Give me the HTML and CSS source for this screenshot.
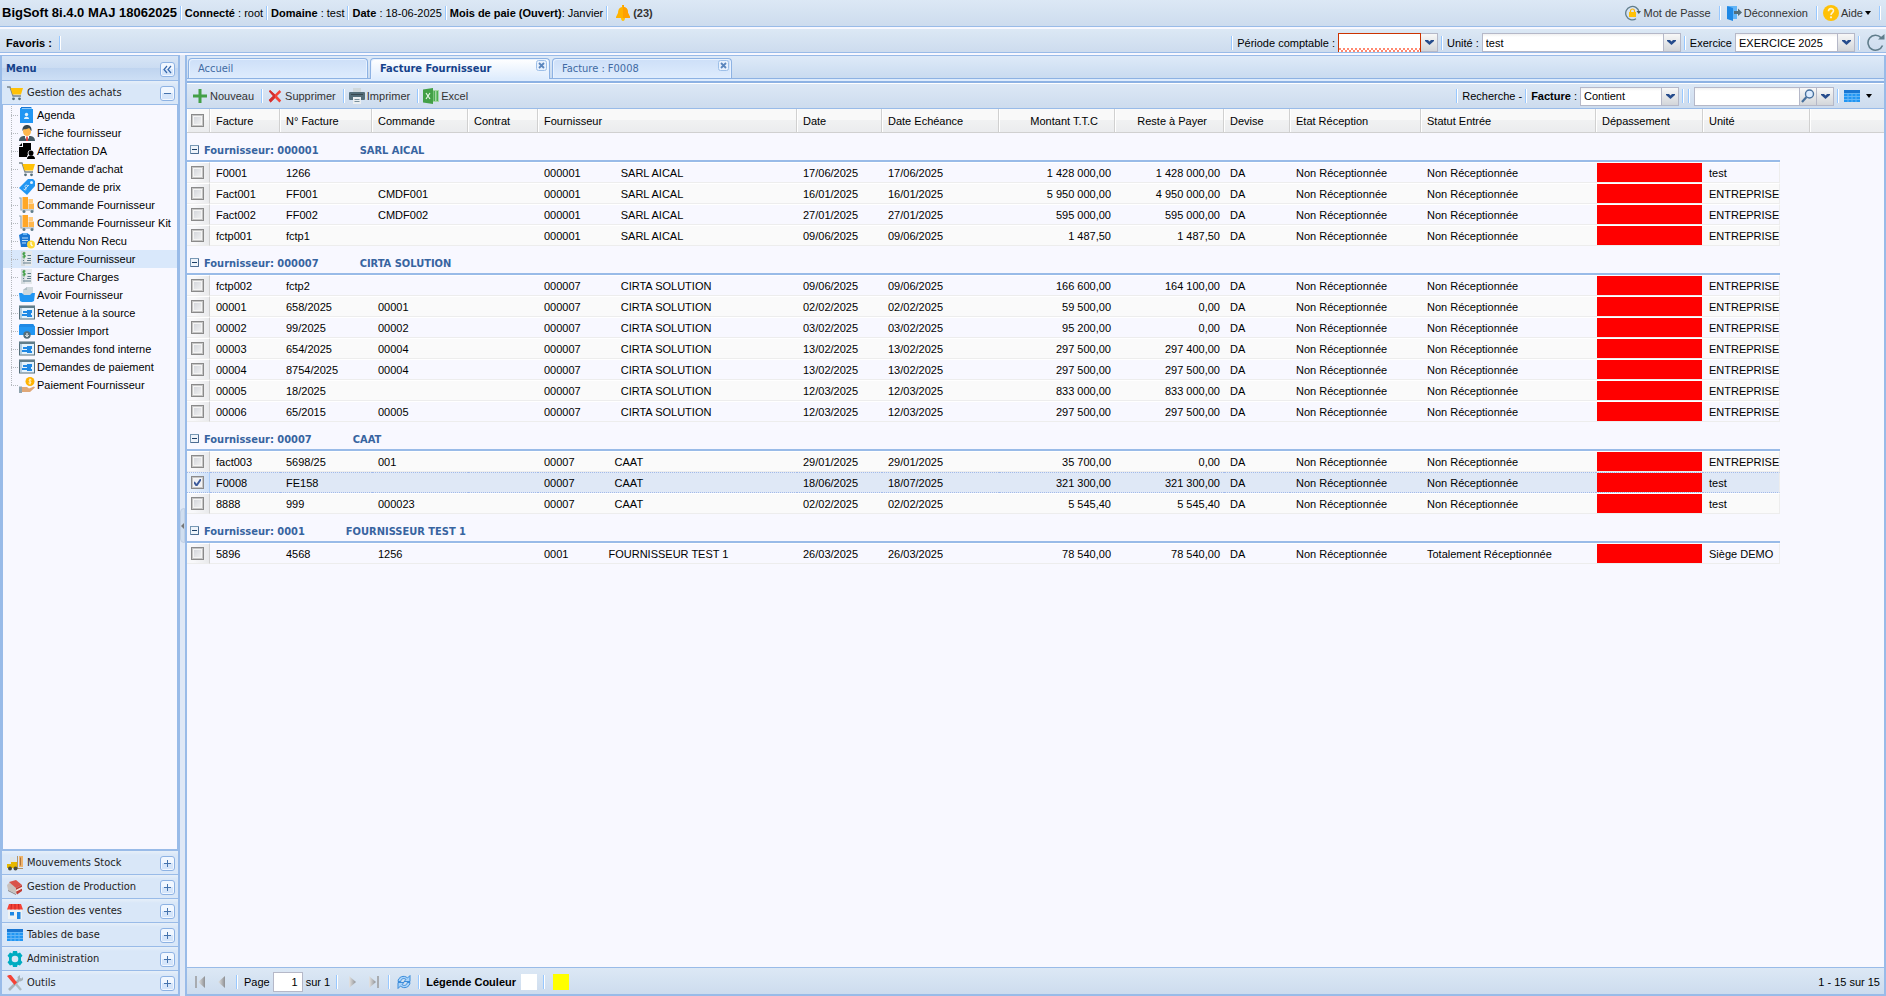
FILE: index.html
```html
<!DOCTYPE html>
<html lang="fr">
<head>
  <meta charset="utf-8">
  <title>BigSoft 8i.4.0 - Facture Fournisseur</title>
  <link rel="stylesheet" href="styles.css">
</head>
<body>
  <svg class="sprite" aria-hidden="true">
    <defs>
      <linearGradient id="g-grey" x1="0" x2="1" y1="0" y2="0"><stop offset="0" stop-color="#e4e4e4"/><stop offset="1" stop-color="#8e9094"/></linearGradient>
    </defs>
    <symbol id="i-bell" viewBox="0 0 16 16"><path d="M7 0h2v2c3 .6 4 3 4 6l2 4v1H1v-1l2-4c0-3 1-5.400 4-6z" fill="#ffb300"/><path d="M8 0h1v2c3 .6 4 3 4 6l2 4v1H8z" fill="#ffa000"/><path d="M6 13h4c0 2-1 3-2 3s-2-1-2-3z" fill="#ffc107"/></symbol>
    <symbol id="i-lock" viewBox="0 0 16 16"><path d="M11 13.800A6.700 6.700 0 1 1 14 7" fill="none" stroke="#607d8b" stroke-width="1.300"/><path d="M11.500 6h4.500l-2.200 3z" fill="#455a64"/><path d="M5.500 7V6a2 2 0 0 1 4 0v1" fill="none" stroke="#ffb300" stroke-width="1.200"/><rect x="4" y="7" width="7" height="5" fill="#ffc107"/></symbol>
    <symbol id="i-door" viewBox="0 0 16 16"><path d="M2 1h9v13H2z" fill="#64b5f6"/><path d="M1 1l6 2v13l-6-2z" fill="#1e88e5"/><path d="M8 6h4V3.500L16 7.500 12 11V9H8z" fill="#546e7a"/></symbol>
    <symbol id="i-help" viewBox="0 0 16 16"><circle cx="8" cy="8" r="8" fill="#ffc107"/><path d="M5.500 6.200c0-3.400 5-3.300 5-.5C10.500 7.500 8 7.700 8 10" fill="none" stroke="#fff3cd" stroke-width="1.600"/><circle cx="8" cy="12.300" r="1.100" fill="#fff3cd"/></symbol>
    <symbol id="i-refresh" viewBox="0 0 18 18"><path d="M15.500 11.500A7.500 7.500 0 1 1 14 3.600" fill="none" stroke="#607d8b" stroke-width="1.600"/><path d="M11 5.500h6.500V0z" fill="#607d8b"/></symbol>
    <symbol id="i-plus" viewBox="0 0 16 16"><path d="M6.500 1h3v5.500H15v3H9.500V15h-3V9.500H1v-3h5.500z" fill="#43a047"/></symbol>
    <symbol id="i-cross" viewBox="0 0 16 16"><path d="M3 2l5 4.500L12.500 2l1.700 2L10 8l4.200 4.500-1.700 2L8 10l-4.500 4.500L1.800 12 6 8 2 3.500z" fill="#f44336"/><path d="M8 6.500V10l-4.500 4.500L1.800 12 6 8 2 3.500 3 2z" fill="#d32f2f"/></symbol>
    <symbol id="i-print" viewBox="0 0 16 16"><path d="M4 0h8v5H4z" fill="#cfd8dc"/><rect y="4" width="16" height="8" rx="1" fill="#546e7a"/><path d="M2 6h12v1H2z" fill="#37474f"/><path d="M4 9h8v7H4z" fill="#eceff1"/><path d="M5.500 11h5v1h-5zM5.500 13h5v1h-5z" fill="#78909c"/></symbol>
    <symbol id="i-excel" viewBox="0 0 16 16"><path d="M9 2h7v12H9z" fill="#a5d6a7"/><path d="M10.500 3h1.500v10h-1.500zM13.500 3H15v10h-1.500z" fill="#4caf50"/><path d="M0 1.500L10 0v16L0 14.500z" fill="#43a047"/><path d="M3 5l4 6M7 5l-4 6" stroke="#e8f5e9" stroke-width="1.200"/></symbol>
    <symbol id="i-table" viewBox="0 0 16 16"><path d="M0 2h16v12H0z" fill="#2196f3"/><path d="M0 2h16v3H0z" fill="#1976d2"/><path d="M0 5.500h16M0 8.500h16M0 11.500h16M4 5v9M8 5v9M12 5v9" stroke="#64b5f6" stroke-width="1"/></symbol>
    <symbol id="i-cart" viewBox="0 0 16 16"><path d="M0 2h3l3 9h8" fill="none" stroke="#78858c" stroke-width="1.300"/><path d="M3.500 3H16l-2 6.500H5.500z" fill="#ffc107"/><circle cx="6.500" cy="13.800" r="1.400" fill="#546e7a"/><circle cx="12.500" cy="13.800" r="1.400" fill="#546e7a"/></symbol>
    <symbol id="i-agenda" viewBox="0 0 16 16"><path d="M2 0h11v3H2z" fill="#90caf9"/><path d="M1 1h2v1h11v14H1z" fill="#2196f3"/><path d="M2 0h10v1H2z" fill="#1976d2"/><circle cx="7.500" cy="7.500" r="1.700" fill="#e3f2fd"/><path d="M5 12c0-3 5-3 5 0z" fill="#e3f2fd"/></symbol>
    <symbol id="i-person" viewBox="0 0 16 16"><path d="M0 16c0-4 3-5 5-5h6c2 0 5 1 5 5z" fill="#455a64"/><path d="M6 10h4v3l-2 2-2-2z" fill="#fff"/><path d="M7.300 11.500h1.400L9 16H7z" fill="#e53935"/><ellipse cx="8" cy="6.500" rx="4" ry="4.500" fill="#ffb74d"/><path d="M3.500 6C3 1 6 0 8 0s5 1 4.500 6C11 5 11 3.500 10 3 8 4.500 5 4 4.500 4.500z" fill="#37474f"/></symbol>
    <symbol id="i-assign" viewBox="0 0 16 16"><path d="M4 0h8v7c-3 0-4 3-3 5-1 0-1 1-1 2H0V4h4z"/><path d="M0 3L3 0v3z"/><circle cx="12" cy="10" r="2.500"/><path d="M8 16c0-5 8-5 8 0z"/></symbol>
    <symbol id="i-tag" viewBox="0 0 16 16"><path d="M9 0h5l2 2v5l-8 9-8-7z" fill="#2196f3"/><circle cx="12.500" cy="3.500" r="1.500" fill="#e3f2fd"/><path d="M9 7c-2-2-4 0-2.500 1.500S7 12 4.500 10M5 11l5-5" fill="none" stroke="#bbdefb" stroke-width="1"/></symbol>
    <symbol id="i-boxes" viewBox="0 0 16 16"><path d="M0 1h2v12h13" fill="none" stroke="#90a4ae" stroke-width="1.200"/><path d="M3.500 0H9v12H3.500z" fill="#ffa726"/><path d="M9.500 2H14v4H9.500z" fill="#ffcc80"/><path d="M9.500 6.500H15V12H9.500z" fill="#ffb74d"/><circle cx="5" cy="14.500" r="1.500" fill="#607d8b"/><circle cx="13" cy="14.500" r="1.500" fill="#607d8b"/></symbol>
    <symbol id="i-pending" viewBox="0 0 16 16"><path d="M0 2l4-2h4l3 2v12H2z" fill="#1976d2"/><path d="M4 0h4v2H4z" fill="#64b5f6"/><path d="M3 5h6M3 7.500h6M3 10h4" stroke="#bbdefb" stroke-width="1"/><circle cx="12" cy="11.500" r="4" fill="#fdd835"/><path d="M12 9v2.500l1.500 1.500" fill="none" stroke="#fff" stroke-width="1.200"/></symbol>
    <symbol id="i-invoice" viewBox="0 0 16 16"><path d="M2 0h11v15H2z" fill="#e6eaec"/><path d="M2 0h4v15H2z" fill="#d3dade"/><path d="M6.500 2.200C4 1 3 3.500 5 4s1.500 3-1.500 1.800M5 1v6.500" fill="none" stroke="#43a047" stroke-width="1.100"/><path d="M8.500 4.500H12M8.500 7.500H12M4 9.500h1M8 9.500h4M4 12h8" stroke="#607d8b" stroke-width="1"/></symbol>
    <symbol id="i-folder" viewBox="0 0 16 16"><path d="M4 3l4-3h6v9H4z" fill="#cfd8dc"/><path d="M4 3l4-3v3z" fill="#b0bec5"/><path d="M0 6h3l2 2h6l2-2h3l-1 8-2 1H3l-2-1z" fill="#2196f3"/></symbol>
    <symbol id="i-window" viewBox="0 0 16 16"><rect x=".5" y="1" width="15" height="13" fill="#e3f2fd" stroke="#546e7a"/><path d="M0 1h16v2H0z" fill="#607d8b"/><path d="M1 3h2v10H1z" fill="#b3cde0"/><path d="M4 6h4v2H4zM8 5h5v3H8zM3 9h5v2H3zM8 8h4v2H8zM8 10h5v2H8z" fill="#1e88e5"/></symbol>
    <symbol id="i-import" viewBox="0 0 16 16"><path d="M1 1h13l2 3v8H0V3z" fill="#2196f3"/><path d="M1 1h13l2 3H0z" fill="#1e88e5"/><circle cx="8" cy="12" r="3.700" fill="#546e7a"/><path d="M8 10v3.500M6.300 12L8 13.800 9.700 12" fill="none" stroke="#fff" stroke-width="1"/></symbol>
    <symbol id="i-hand" viewBox="0 0 16 16"><circle cx="11" cy="4.500" r="4.500" fill="#ffb300"/><path d="M12.500 3c-2.500-1.200-3 1-1.500 1.500s1 2.500-1.500 1.500M11 1.500v6" fill="none" stroke="#fff3cd" stroke-width="1"/><path d="M3 10h5l2 1.500 5-2 1 1-5 4.500H3z" fill="#e0a878"/><path d="M0 9.500h3V16H0z" fill="#90a4ae"/></symbol>
    <symbol id="i-forklift" viewBox="0 0 16 16"><path d="M3 2h5v8H3z" fill="#dfe5e8"/><path d="M0 9h4V7h6v6H0z" fill="#e6b800"/><path d="M10 1h1v12h5v1h-6z" fill="#b0956b"/><path d="M12 1h4v11h-4z" fill="#efb36a"/><path d="M13.500 2.500v8" stroke="#b0743a"/><circle cx="3" cy="13.500" r="2" fill="#4a4a3a"/><circle cx="8.500" cy="13.500" r="2" fill="#4a4a3a"/></symbol>
    <symbol id="i-prod" viewBox="0 0 16 16"><path d="M0 6l3-3 7 5v7L1 11z" fill="#c9c1bd"/><path d="M2 3l7-2 6 5-6 3z" fill="#d9534a"/><path d="M9 9l6-3v2l-6 3zM9 12.500l6-3v2.500l-5 3.500z" fill="#c23d35"/><path d="M9 11l6-3v1.500l-6 3z" fill="#f3ddd5"/><path d="M1 11l8 4v1l-8-4z" fill="#8d8683"/></symbol>
    <symbol id="i-shop" viewBox="0 0 16 16"><path d="M1 6h14v10H1z" fill="#eef2f4"/><path d="M2 1h12l2 5.500H0z" fill="#f44336"/><path d="M4.500 1L4 6.500M8 1v5.500M11.500 1l.5 5.500" stroke="#c62828"/><path d="M3 9h4v3.500H3z" fill="#1e88e5"/><path d="M10 9h3.500v7H10z" fill="#1e88e5"/></symbol>
    <symbol id="i-gear" viewBox="0 0 16 16"><path d="M6 0h4l.6 2.400 2.400-.9 2.500 3.300L14 6.500v3l1.500 1.800-2.500 3.300-2.400-.9L10 16H6l-.6-2.300-2.400.9L.5 11.300 2 9.500v-3L.5 4.800 3 1.500l2.400.9z" fill="#00acc1"/><circle cx="8" cy="8" r="3.300" fill="#dae7f6"/></symbol>
    <symbol id="i-tools" viewBox="0 0 16 16"><path d="M2 15L13 4" stroke="#a9b4ba" stroke-width="2.600"/><path d="M11 5l-.5-3L13 0v3l1.500.5L16 2v3l-2.500 1.500z" fill="#a9b4ba"/><path d="M8 8l6 7" stroke="#b0bec5" stroke-width="2.400"/><path d="M0 1l2-1h2l6 7.500L7.500 10z" fill="#f44336"/></symbol>
    <symbol id="i-lens" viewBox="0 0 16 16"><path d="M2 14l4.500-5" stroke="#47709d" stroke-width="2.200"/><circle cx="9.500" cy="6" r="4" fill="#dcecff" stroke="#47709d" stroke-width="1.400"/></symbol>
    <symbol id="i-reload" viewBox="0 0 16 16"><path d="M2 7.500C2 3 8 .5 11.500 4L14 1.500v6H8l2-2C7.500 3.500 5 5 4.800 7.500z" fill="#a9d4fb" stroke="#2e83d6" stroke-width=".9"/><path d="M14 8.500c0 4.500-6 7-9.500 3.500L2 14.500v-6h6l-2 2c2.500 2 5 .5 5.200-2z" fill="#a9d4fb" stroke="#2e83d6" stroke-width=".9"/></symbol>
    <symbol id="i-first" viewBox="0 0 12 12"><path d="M1 0h2v12H1z" fill="#a8abb0"/><path d="M11 0v12L4 6z" fill="url(#g-grey)"/></symbol>
    <symbol id="i-prev" viewBox="0 0 12 12"><path d="M9 0v12L2 6z" fill="url(#g-grey)"/></symbol>
    <symbol id="i-next" viewBox="0 0 12 12"><path d="M3 0v12l7-6z" fill="url(#g-grey)"/></symbol>
    <symbol id="i-last" viewBox="0 0 12 12"><path d="M9 0h2v12H9z" fill="#a8abb0"/><path d="M1 0v12l7-6z" fill="url(#g-grey)"/></symbol>
    <symbol id="i-close" viewBox="0 0 11 11"><rect x=".5" y=".5" width="10" height="10" rx="2" fill="#e8f1fd" stroke="#9dbfe8"/><path d="M3 3l5 5M8 3l-5 5" stroke="#5b86bd" stroke-width="1.800"/></symbol>
    <symbol id="i-tool-plus" viewBox="0 0 15 15"><rect x=".5" y=".5" width="14" height="14" rx="2.500" fill="#f1f7ff" stroke="#8db2e3"/><rect x="2" y="7" width="11" height="6" fill="#d5e5fa"/><path d="M4 7.500h7M7.500 4v7" stroke="#4573ad"/></symbol>
    <symbol id="i-tool-minus" viewBox="0 0 15 15"><rect x=".5" y=".5" width="14" height="14" rx="2.500" fill="#f1f7ff" stroke="#8db2e3"/><rect x="2" y="7" width="11" height="6" fill="#d5e5fa"/><path d="M4 7.500h7" stroke="#4573ad"/></symbol>
    <symbol id="i-tool-left" viewBox="0 0 15 15"><rect x=".5" y=".5" width="14" height="14" rx="2.500" fill="#f1f7ff" stroke="#8db2e3"/><rect x="2" y="7" width="11" height="6" fill="#d5e5fa"/><path d="M7 4L4 7.500 7 11M11 4L8 7.500l3 3.500" fill="none" stroke="#3668ac" stroke-width="1.200"/></symbol>
    <symbol id="i-group" viewBox="0 0 9 9"><rect x=".5" y=".5" width="8" height="8" fill="#eef3fa" stroke="#7898b5"/><path d="M8.500 1v7.500H1" fill="none" stroke="#4c6c92"/><path d="M2 4.500h5" stroke="#1c3e66"/></symbol>
  </svg>

  <header class="bar topbar">
    <strong class="brand">BigSoft 8i.4.0 MAJ 18062025</strong>
    <i class="sep"></i><span><b>Connecté</b> : root</span>
    <i class="sep"></i><span><b>Domaine</b> : test</span>
    <i class="sep"></i><span><b>Date</b> : 18-06-2025</span>
    <i class="sep"></i><span><b>Mois de paie (Ouvert)</b>: Janvier</span>
    <i class="sep"></i>
    <button class="btn alerts"><svg class="icon"><use href="#i-bell"/></svg><b>(23)</b></button>
    <div class="bar-right">
      <button class="btn"><svg class="icon"><use href="#i-lock"/></svg>Mot de Passe</button><i class="sep"></i>
      <button class="btn"><svg class="icon"><use href="#i-door"/></svg>Déconnexion</button><i class="sep"></i>
      <button class="btn"><svg class="icon"><use href="#i-help"/></svg>Aide<i class="caret"></i></button><i class="sep"></i>
    </div>
  </header>

  <div class="bar favbar">
    <b>Favoris :</b><i class="sep fav-sep"></i>
    <div class="bar-right">
      <i class="sep"></i>
      <label for="periode">Période comptable :</label>
      <span class="combo"><select id="periode" class="w-periode invalid"><option></option></select><button class="trigger" aria-label="Ouvrir"></button></span>
      <i class="sep"></i>
      <label for="unite">Unité :</label>
      <span class="combo"><select id="unite" class="w-unite"><option>test</option></select><button class="trigger" aria-label="Ouvrir"></button></span>
      <i class="sep"></i>
      <label for="exercice">Exercice</label>
      <span class="combo"><select id="exercice" class="w-exercice"><option>EXERCICE 2025</option></select><button class="trigger" aria-label="Ouvrir"></button></span>
      <i class="sep"></i>
      <button class="btn" aria-label="Actualiser"><svg class="icon icon-lg"><use href="#i-refresh"/></svg></button>
    </div>
  </div>

  <div class="layout">
    <aside class="sidebar">
      <div class="side-head"><b>Menu</b><button class="tool" aria-label="Réduire"><svg><use href="#i-tool-left"/></svg></button></div>
      <div class="acc"><svg class="icon"><use href="#i-cart"/></svg><span>Gestion des achats</span><button class="tool" aria-label="Fermer"><svg><use href="#i-tool-minus"/></svg></button></div>
      <nav class="tree">
        <a href="#"><svg class="icon"><use href="#i-agenda"/></svg>Agenda</a>
        <a href="#"><svg class="icon"><use href="#i-person"/></svg>Fiche fournisseur</a>
        <a href="#"><svg class="icon"><use href="#i-assign"/></svg>Affectation DA</a>
        <a href="#"><svg class="icon"><use href="#i-cart"/></svg>Demande d'achat</a>
        <a href="#"><svg class="icon"><use href="#i-tag"/></svg>Demande de prix</a>
        <a href="#"><svg class="icon"><use href="#i-boxes"/></svg>Commande Fournisseur</a>
        <a href="#"><svg class="icon"><use href="#i-boxes"/></svg>Commande Fournisseur Kit</a>
        <a href="#"><svg class="icon"><use href="#i-pending"/></svg>Attendu Non Recu</a>
        <a href="#" class="selected"><svg class="icon"><use href="#i-invoice"/></svg>Facture Fournisseur</a>
        <a href="#"><svg class="icon"><use href="#i-invoice"/></svg>Facture Charges</a>
        <a href="#"><svg class="icon"><use href="#i-folder"/></svg>Avoir Fournisseur</a>
        <a href="#"><svg class="icon"><use href="#i-window"/></svg>Retenue à la source</a>
        <a href="#"><svg class="icon"><use href="#i-import"/></svg>Dossier Import</a>
        <a href="#"><svg class="icon"><use href="#i-window"/></svg>Demandes fond interne</a>
        <a href="#"><svg class="icon"><use href="#i-window"/></svg>Demandes de paiement</a>
        <a href="#"><svg class="icon"><use href="#i-hand"/></svg>Paiement Fournisseur</a>
      </nav>
      <div class="acc"><svg class="icon"><use href="#i-forklift"/></svg><span>Mouvements Stock</span><button class="tool" aria-label="Ouvrir"><svg><use href="#i-tool-plus"/></svg></button></div>
      <div class="acc"><svg class="icon"><use href="#i-prod"/></svg><span>Gestion de Production</span><button class="tool" aria-label="Ouvrir"><svg><use href="#i-tool-plus"/></svg></button></div>
      <div class="acc"><svg class="icon"><use href="#i-shop"/></svg><span>Gestion des ventes</span><button class="tool" aria-label="Ouvrir"><svg><use href="#i-tool-plus"/></svg></button></div>
      <div class="acc"><svg class="icon"><use href="#i-table"/></svg><span>Tables de base</span><button class="tool" aria-label="Ouvrir"><svg><use href="#i-tool-plus"/></svg></button></div>
      <div class="acc"><svg class="icon"><use href="#i-gear"/></svg><span>Administration</span><button class="tool" aria-label="Ouvrir"><svg><use href="#i-tool-plus"/></svg></button></div>
      <div class="acc"><svg class="icon"><use href="#i-tools"/></svg><span>Outils</span><button class="tool" aria-label="Ouvrir"><svg><use href="#i-tool-plus"/></svg></button></div>
    </aside>

    <div class="splitter"><button class="mini" aria-label="Réduire le menu"></button></div>

    <main class="main">
      <div class="tabs">
        <a href="#" class="tab">Accueil</a>
        <a href="#" class="tab active">Facture Fournisseur<svg class="close"><use href="#i-close"/></svg></a>
        <a href="#" class="tab">Facture : F0008<svg class="close"><use href="#i-close"/></svg></a>
      </div>
      <div class="tab-band"></div>

      <div class="bar toolbar">
        <button class="btn"><svg class="icon"><use href="#i-plus"/></svg>Nouveau</button><i class="sep"></i>
        <button class="btn"><svg class="icon"><use href="#i-cross"/></svg>Supprimer</button><i class="sep"></i>
        <button class="btn"><svg class="icon"><use href="#i-print"/></svg>Imprimer</button><i class="sep"></i>
        <button class="btn"><svg class="icon"><use href="#i-excel"/></svg>Excel</button>
        <div class="bar-right">
          <i class="sep"></i><span>Recherche -</span>
          <i class="sep"></i>
          <label for="filtre"><b>Facture</b> :</label>
          <span class="combo"><select id="filtre" class="w-filtre"><option>Contient</option></select><button class="trigger" aria-label="Ouvrir"></button></span>
          <i class="sep"></i><i class="sep"></i>
          <span class="combo"><input type="text" class="w-search" aria-label="Recherche"><button class="trigger lens" aria-label="Chercher"><svg class="icon"><use href="#i-lens"/></svg></button><button class="trigger" aria-label="Ouvrir"></button></span>
          <i class="sep"></i>
          <button class="btn view" aria-label="Colonnes"><svg class="icon"><use href="#i-table"/></svg><i class="caret"></i></button>
        </div>
      </div>

      <div class="grid">
        <table>
          <colgroup>
            <col class="c-check"><col class="c-facture"><col class="c-num"><col class="c-cmd"><col class="c-contrat"><col class="c-four"><col class="c-date"><col class="c-ech"><col class="c-montant"><col class="c-reste"><col class="c-devise"><col class="c-etat"><col class="c-statut"><col class="c-dep"><col class="c-unite"><col class="c-extra"><col>
          </colgroup>
          <thead>
            <tr>
              <th class="check"><input type="checkbox" aria-label="Tout sélectionner"></th><th>Facture</th><th>N° Facture</th><th>Commande</th><th>Contrat</th><th>Fournisseur</th><th>Date</th><th>Date Echéance</th><th class="num">Montant T.T.C</th><th class="num">Reste à Payer</th><th>Devise</th><th>Etat Réception</th><th>Statut Entrée</th><th>Dépassement</th><th colspan="2">Unité</th><th class="rest"></th>
            </tr>
          </thead>
          <tbody>
            <tr class="group"><td colspan="15"><svg><use href="#i-group"/></svg>Fournisseur: 000001<span>SARL AICAL</span></td></tr>
            <tr><td class="check"><input type="checkbox" aria-label="F0001"></td><td>F0001</td><td>1266</td><td></td><td></td><td>000001<span>SARL AICAL</span></td><td>17/06/2025</td><td>17/06/2025</td><td class="num">1 428 000,00</td><td class="num">1 428 000,00</td><td>DA</td><td>Non Réceptionnée</td><td>Non Réceptionnée</td><td class="over"><div></div></td><td class="unite">test</td></tr>
            <tr class="alt"><td class="check"><input type="checkbox" aria-label="Fact001"></td><td>Fact001</td><td>FF001</td><td>CMDF001</td><td></td><td>000001<span>SARL AICAL</span></td><td>16/01/2025</td><td>16/01/2025</td><td class="num">5 950 000,00</td><td class="num">4 950 000,00</td><td>DA</td><td>Non Réceptionnée</td><td>Non Réceptionnée</td><td class="over"><div></div></td><td class="unite">ENTREPRISE</td></tr>
            <tr><td class="check"><input type="checkbox" aria-label="Fact002"></td><td>Fact002</td><td>FF002</td><td>CMDF002</td><td></td><td>000001<span>SARL AICAL</span></td><td>27/01/2025</td><td>27/01/2025</td><td class="num">595 000,00</td><td class="num">595 000,00</td><td>DA</td><td>Non Réceptionnée</td><td>Non Réceptionnée</td><td class="over"><div></div></td><td class="unite">ENTREPRISE</td></tr>
            <tr class="alt"><td class="check"><input type="checkbox" aria-label="fctp001"></td><td>fctp001</td><td>fctp1</td><td></td><td></td><td>000001<span>SARL AICAL</span></td><td>09/06/2025</td><td>09/06/2025</td><td class="num">1 487,50</td><td class="num">1 487,50</td><td>DA</td><td>Non Réceptionnée</td><td>Non Réceptionnée</td><td class="over"><div></div></td><td class="unite">ENTREPRISE</td></tr>

            <tr class="group"><td colspan="15"><svg><use href="#i-group"/></svg>Fournisseur: 000007<span>CIRTA SOLUTION</span></td></tr>
            <tr><td class="check"><input type="checkbox" aria-label="fctp002"></td><td>fctp002</td><td>fctp2</td><td></td><td></td><td>000007<span>CIRTA SOLUTION</span></td><td>09/06/2025</td><td>09/06/2025</td><td class="num">166 600,00</td><td class="num">164 100,00</td><td>DA</td><td>Non Réceptionnée</td><td>Non Réceptionnée</td><td class="over"><div></div></td><td class="unite">ENTREPRISE</td></tr>
            <tr class="alt"><td class="check"><input type="checkbox" aria-label="00001"></td><td>00001</td><td>658/2025</td><td>00001</td><td></td><td>000007<span>CIRTA SOLUTION</span></td><td>02/02/2025</td><td>02/02/2025</td><td class="num">59 500,00</td><td class="num">0,00</td><td>DA</td><td>Non Réceptionnée</td><td>Non Réceptionnée</td><td class="over"><div></div></td><td class="unite">ENTREPRISE</td></tr>
            <tr><td class="check"><input type="checkbox" aria-label="00002"></td><td>00002</td><td>99/2025</td><td>00002</td><td></td><td>000007<span>CIRTA SOLUTION</span></td><td>03/02/2025</td><td>03/02/2025</td><td class="num">95 200,00</td><td class="num">0,00</td><td>DA</td><td>Non Réceptionnée</td><td>Non Réceptionnée</td><td class="over"><div></div></td><td class="unite">ENTREPRISE</td></tr>
            <tr class="alt"><td class="check"><input type="checkbox" aria-label="00003"></td><td>00003</td><td>654/2025</td><td>00004</td><td></td><td>000007<span>CIRTA SOLUTION</span></td><td>13/02/2025</td><td>13/02/2025</td><td class="num">297 500,00</td><td class="num">297 400,00</td><td>DA</td><td>Non Réceptionnée</td><td>Non Réceptionnée</td><td class="over"><div></div></td><td class="unite">ENTREPRISE</td></tr>
            <tr><td class="check"><input type="checkbox" aria-label="00004"></td><td>00004</td><td>8754/2025</td><td>00004</td><td></td><td>000007<span>CIRTA SOLUTION</span></td><td>13/02/2025</td><td>13/02/2025</td><td class="num">297 500,00</td><td class="num">297 500,00</td><td>DA</td><td>Non Réceptionnée</td><td>Non Réceptionnée</td><td class="over"><div></div></td><td class="unite">ENTREPRISE</td></tr>
            <tr class="alt"><td class="check"><input type="checkbox" aria-label="00005"></td><td>00005</td><td>18/2025</td><td></td><td></td><td>000007<span>CIRTA SOLUTION</span></td><td>12/03/2025</td><td>12/03/2025</td><td class="num">833 000,00</td><td class="num">833 000,00</td><td>DA</td><td>Non Réceptionnée</td><td>Non Réceptionnée</td><td class="over"><div></div></td><td class="unite">ENTREPRISE</td></tr>
            <tr><td class="check"><input type="checkbox" aria-label="00006"></td><td>00006</td><td>65/2015</td><td>00005</td><td></td><td>000007<span>CIRTA SOLUTION</span></td><td>12/03/2025</td><td>12/03/2025</td><td class="num">297 500,00</td><td class="num">297 500,00</td><td>DA</td><td>Non Réceptionnée</td><td>Non Réceptionnée</td><td class="over"><div></div></td><td class="unite">ENTREPRISE</td></tr>

            <tr class="group"><td colspan="15"><svg><use href="#i-group"/></svg>Fournisseur: 00007<span>CAAT</span></td></tr>
            <tr class="alt"><td class="check"><input type="checkbox" aria-label="fact003"></td><td>fact003</td><td>5698/25</td><td>001</td><td></td><td>00007<span>CAAT</span></td><td>29/01/2025</td><td>29/01/2025</td><td class="num">35 700,00</td><td class="num">0,00</td><td>DA</td><td>Non Réceptionnée</td><td>Non Réceptionnée</td><td class="over"><div></div></td><td class="unite">ENTREPRISE</td></tr>
            <tr class="selected"><td class="check"><input type="checkbox" checked aria-label="F0008"></td><td>F0008</td><td>FE158</td><td></td><td></td><td>00007<span>CAAT</span></td><td>18/06/2025</td><td>18/07/2025</td><td class="num">321 300,00</td><td class="num">321 300,00</td><td>DA</td><td>Non Réceptionnée</td><td>Non Réceptionnée</td><td class="over"><div></div></td><td class="unite">test</td></tr>
            <tr class="alt"><td class="check"><input type="checkbox" aria-label="8888"></td><td>8888</td><td>999</td><td>000023</td><td></td><td>00007<span>CAAT</span></td><td>02/02/2025</td><td>02/02/2025</td><td class="num">5 545,40</td><td class="num">5 545,40</td><td>DA</td><td>Non Réceptionnée</td><td>Non Réceptionnée</td><td class="over"><div></div></td><td class="unite">test</td></tr>

            <tr class="group"><td colspan="15"><svg><use href="#i-group"/></svg>Fournisseur: 0001<span>FOURNISSEUR TEST 1</span></td></tr>
            <tr><td class="check"><input type="checkbox" aria-label="5896"></td><td>5896</td><td>4568</td><td>1256</td><td></td><td>0001<span>FOURNISSEUR TEST 1</span></td><td>26/03/2025</td><td>26/03/2025</td><td class="num">78 540,00</td><td class="num">78 540,00</td><td>DA</td><td>Non Réceptionnée</td><td>Totalement Réceptionnée</td><td class="over"><div></div></td><td class="unite">Siège DEMO</td></tr>
          </tbody>
        </table>
      </div>

      <footer class="bar paging">
        <button class="nav-btn" aria-label="Première page"><svg><use href="#i-first"/></svg></button>
        <button class="nav-btn" aria-label="Page précédente"><svg><use href="#i-prev"/></svg></button>
        <i class="sep"></i>
        <label for="page">Page</label>
        <input type="text" id="page" class="page" value="1">
        <span>sur 1</span>
        <i class="sep"></i>
        <button class="nav-btn" aria-label="Page suivante"><svg><use href="#i-next"/></svg></button>
        <button class="nav-btn" aria-label="Dernière page"><svg><use href="#i-last"/></svg></button>
        <i class="sep"></i>
        <button class="reload" aria-label="Actualiser"><svg class="icon"><use href="#i-reload"/></svg></button>
        <i class="sep"></i>
        <b>Légende Couleur</b>
        <span class="swatch white"></span>
        <i class="sep"></i>
        <span class="swatch yellow"></span>
        <span class="bar-right">1 - 15 sur 15</span>
      </footer>
    </main>
  </div>
</body>
</html>
```
FILE: styles.css
```css
* {
  box-sizing: border-box;
}
body {
  margin: 0;
  height: 100vh;
  display: flex;
  flex-direction: column;
  overflow: hidden;
  background-color: #f8f8ff;
  color: #000;
  font: 11px/14px "Liberation Sans", Arial, sans-serif;
}
button, input, select {
  font: inherit;
  color: inherit;
  margin: 0;
  padding: 0;
}
button {
  background: none;
  border: 0;
  cursor: pointer;
}
a {
  color: inherit;
  text-decoration: none;
}
svg {
  display: block;
  flex: none;
}
.sprite {
  position: absolute;
  width: 0;
  height: 0;
}
.icon {
  width: 16px;
  height: 16px;
}
.icon-lg {
  width: 18px;
  height: 18px;
}

/* toolbars */
.bar {
  display: flex;
  align-items: center;
  flex: none;
  gap: 3px;
  white-space: nowrap;
  background: linear-gradient(#dce8f5, #cddcee);
  border-bottom: 1px solid #99bbe8;
}
.bar-right {
  display: flex;
  align-items: center;
  gap: 3px;
  margin-left: auto;
}
.sep {
  flex: none;
  width: 2px;
  height: 14px;
  border-left: 1px solid #98c8ff;
  border-right: 1px solid #fff;
}
.bar-right .sep {
  margin-right: 1px;
}
.btn {
  display: flex;
  align-items: center;
  gap: 2px;
  padding: 0 4px 0 1px;
  color: #333;
}
.caret {
  border: 3px solid transparent;
  border-top: 4px solid #000;
  border-bottom: 0;
}
.topbar {
  height: 27px;
  padding: 0 4px 0 2px;
}
.topbar .bar-right .btn {
  padding-right: 5px;
}
.brand {
  font-size: 13px;
}
.alerts {
  padding-left: 4px;
}
.favbar {
  height: 24px;
  margin: 2px 0;
  padding: 4px 1px 0 6px;
}
.fav-sep {
  margin-left: 4px;
}
.favbar .btn {
  padding: 0 0 0 3px;
}

/* combos */
.combo {
  display: flex;
}
.combo select, .combo input {
  appearance: none;
  height: 19px;
  padding: 0 3px;
  background: linear-gradient(#f0f0f0, #fff 3px);
  border: 1px solid #b5b8c8;
  border-radius: 0;
}
.combo select.invalid {
  background: #fff repeating-conic-gradient(#fff 0 25%, #ff8870 0 50%) 0 100% / 4px 4px repeat-x;
  border-color: #c30;
  border-bottom: 0;
}
.trigger {
  width: 17px;
  height: 19px;
  border: 1px solid #b5b8c8;
  border-left: 0;
  background: url("data:image/svg+xml,%3Csvg xmlns='http://www.w3.org/2000/svg' width='9' height='5'%3E%3Cpath d='M0 0h3l1.500 1.500L6 0h3v1L4.500 5 0 1z' fill='%23264c8c'/%3E%3C/svg%3E") center / 9px 5px no-repeat, linear-gradient(#f8f8f8, #d3d6da);
}
.trigger.lens {
  background: linear-gradient(#f8f8f8, #d3d6da);
}
.w-periode {
  width: 83px;
}
.w-unite {
  width: 182px;
}
.w-exercice {
  width: 103px;
}
.w-filtre {
  width: 82px;
}
.w-search {
  width: 106px;
}

/* layout */
.layout {
  flex: 1;
  min-height: 0;
  display: flex;
  background-color: #dfe8f6;
}
.sidebar {
  flex: none;
  width: 180px;
  display: flex;
  flex-direction: column;
  border: 2px solid #99bbe8;
  border-top-width: 1px;
}
.side-head, .acc {
  flex: none;
  display: flex;
  align-items: center;
  height: 24px;
  padding: 1px 3px 0 5px;
  border-bottom: 1px solid #99bbe8;
  font-family: "DejaVu Sans Condensed", Tahoma, sans-serif;
}
.side-head {
  height: 25px;
  padding-top: 2px;
  padding-left: 4px;
  color: #15428b;
  background: linear-gradient(#d7e5f6, #cbdcf2 50%, #bfd4ef 50%, #cddff5);
}
.acc {
  gap: 4px;
  color: #222;
  background: linear-gradient(#e6eff9, #d9e7f8 4px);
}
.acc:last-child {
  height: 23px;
  border-bottom: 0;
}
.tool {
  margin-left: auto;
}
.tool svg {
  width: 15px;
  height: 15px;
}
.tree {
  flex: 1;
  min-height: 0;
  padding-top: 1px;
  background-color: #f8f8ff;
  border: 1px solid #99bbe8;
  border-top: 0;
  border-bottom-width: 2px;
}
.tree a {
  display: flex;
  align-items: center;
  gap: 2px;
  height: 18px;
  padding-left: 16px;
  white-space: nowrap;
  background:
    repeating-linear-gradient(#b4b8bd 0 1px, transparent 1px 2px) 8px 0 / 1px 100% no-repeat,
    repeating-linear-gradient(90deg, #b4b8bd 0 1px, transparent 1px 2px) 8px 9px / 8px 1px no-repeat;
}
.tree a:last-child {
  background-size: 1px 50%, 8px 1px;
}
.tree a.selected {
  background-color: #d9e8fb;
}
.splitter {
  flex: none;
  width: 5px;
  display: flex;
  align-items: center;
}
.mini {
  width: 5px;
  height: 35px;
  background-color: #d0def0;
  border: 1px solid #c0cfe4;
  border-radius: 4px 0 0 4px;
}
.mini::before {
  content: "";
  display: block;
  border: 3px solid transparent;
  border-right-color: #777;
  border-left: 0;
}
.main {
  flex: 1;
  min-width: 0;
  display: flex;
  flex-direction: column;
  border: 2px solid #99bbe8;
  border-top-width: 1px;
}

/* tabs */
.tabs {
  flex: none;
  display: flex;
  align-items: flex-end;
  gap: 2px;
  height: 23px;
  padding: 2px 1px 0;
  background: linear-gradient(#deeaf8, #c9dbf0);
  border-bottom: 1px solid #8db2e3;
  font-family: "DejaVu Sans Condensed", Tahoma, sans-serif;
}
.tab {
  display: flex;
  justify-content: space-between;
  width: 180px;
  height: 20px;
  padding: 3px 2px 0 9px;
  border: 1px solid #8db2e3;
  border-bottom: 0;
  border-radius: 4px 4px 0 0;
  background: linear-gradient(#cddff8, #deecfd);
  box-shadow: inset 1px 1px #e8f2ff, inset -1px 0 #e8f2ff;
  color: #416aa3;
}
.tab.active {
  height: 21px;
  margin-bottom: -1px;
  background: linear-gradient(#fff, #deecfd);
  color: #15428b;
  font-weight: bold;
}
.close {
  width: 11px;
  height: 11px;
  margin-top: -2px;
}
.tab-band {
  flex: none;
  height: 4px;
  background-color: #deecfd;
  border-bottom: 2px solid #8db2e3;
}
.toolbar {
  height: 26px;
  padding: 0 2px 0 4px;
  border-top: 1px solid #fff;
}
.toolbar .view {
  gap: 6px;
  padding-right: 10px;
}

/* grid */
.grid {
  flex: 1;
  min-height: 0;
  overflow: hidden;
  background-color: #f8f8ff;
}
table {
  width: 100%;
  table-layout: fixed;
  border-collapse: separate;
  border-spacing: 0;
}
.c-check { width: 23px; }
.c-facture { width: 70px; }
.c-num { width: 92px; }
.c-cmd { width: 96px; }
.c-contrat { width: 70px; }
.c-four { width: 259px; }
.c-date { width: 85px; }
.c-ech { width: 117px; }
.c-montant { width: 116px; }
.c-reste { width: 109px; }
.c-devise { width: 66px; }
.c-etat { width: 131px; }
.c-statut { width: 175px; }
.c-dep { width: 107px; }
.c-unite { width: 77px; }
.c-extra { width: 30px; }
th, td {
  padding: 0 4px 0 6px;
  text-align: left;
  white-space: nowrap;
  overflow: hidden;
}
th {
  height: 24px;
  font-weight: normal;
  background: linear-gradient(#f9f9f9 50%, #f0f1f2 50%, #ebecee);
  border-right: 1px solid #d0d0d0;
  border-bottom: 1px solid #d0d0d0;
  box-shadow: inset 1px 0 #fff;
}
th.rest {
  border-right: 0;
}
td {
  height: 21px;
  border-top: 1px solid #fff;
  border-bottom: 1px solid #ededed;
}
th.num, td.num {
  text-align: right;
}
th.num {
  padding-right: 16px;
}
td span {
  margin-left: 40px;
}
.alt td {
  background-color: #fafafa;
}
th.check, td.check {
  padding: 0 0 0 4px;
}
tr td.check {
  background: linear-gradient(90deg, #f8f8fa 30%, #e9eaec);
  border-right: 1px solid #d0d0d0;
}
td.over {
  padding: 0 1px;
}
td.over div {
  height: 19px;
  background-color: red;
}
td.unite {
  padding-right: 0;
  border-right: 1px solid #ededed;
}
tr.selected td {
  background-color: #dfe8f6;
  border-top: 1px dotted #a3bae9;
  border-bottom: 1px dotted #a3bae9;
}
tr.selected td.check {
  background: linear-gradient(90deg, #e6f0fc 30%, #cfe1f8);
  border-right: 1px solid #aaccf6;
}
input[type="checkbox"] {
  appearance: none;
  display: block;
  width: 13px;
  height: 13px;
  background: linear-gradient(135deg, #cdd0d6, #f6f6f6);
  border: 1px solid #8a8a8a;
  box-shadow: inset 0 0 0 1px #c6c6c6, inset 0 0 0 2px #f4f4f4;
}
input[type="checkbox"]:checked {
  background: url("data:image/svg+xml,%3Csvg xmlns='http://www.w3.org/2000/svg' width='11' height='11'%3E%3Cpath d='M2 5l2.500 3.500L9 2' fill='none' stroke='%233c5a9a' stroke-width='2'/%3E%3C/svg%3E") center no-repeat, #eef0f4;
}
tr.group td {
  height: 29px;
  padding: 8px 0 0 3px;
  border-top: 0;
  border-bottom: 2px solid #99bbe8;
  color: #3764a0;
  font-family: "DejaVu Sans Condensed", Tahoma, sans-serif;
  font-weight: bold;
}
tr.group svg {
  display: inline-block;
  width: 9px;
  height: 9px;
  margin-right: 5px;
}
tr.group span {
  margin-left: 41px;
}

/* paging */
.paging {
  height: 27px;
  padding: 1px 4px 0 5px;
  border-top: 1px solid #99bbe8;
  border-bottom: 0;
}
.paging .sep {
  margin: 0 3px;
}
.nav-btn {
  padding: 0 2px;
}
.nav-btn + .nav-btn {
  margin-left: 3px;
}
.nav-btn svg {
  width: 12px;
  height: 12px;
}
.page {
  width: 30px;
  height: 20px;
  padding: 0 4px;
  border: 1px solid #b5b8c8;
  background-color: #fff;
  text-align: right;
}
.swatch {
  width: 16px;
  height: 16px;
  margin-left: 2px;
}
.swatch.white {
  background-color: #fff;
}
.swatch.yellow {
  background-color: #ff0;
}
```
